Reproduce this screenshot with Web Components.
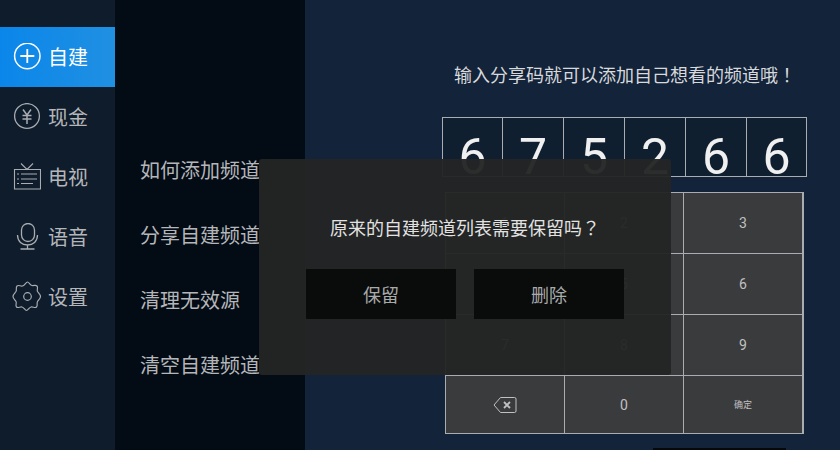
<!DOCTYPE html>
<html><head><meta charset="utf-8">
<style>
html,body{margin:0;padding:0;background:#12233a;}
body{width:840px;height:450px;overflow:hidden;font-family:"Noto Sans CJK SC","Noto Sans",sans-serif;}
</style></head>
<body>
<app-screen>
  <side-nav slot="nav">
    <nav-item active label="自建"><svg viewBox="0 0 28 28" width="28" height="28" fill="none" stroke="#fff" stroke-width="1.5"><circle cx="14.300" cy="13" r="12.700"/><path d="M14.300 6v14M7.300 13h14" stroke-width="1.8"/></svg></nav-item>
    <nav-item label="现金"><svg viewBox="0 0 28 28" width="28" height="28" fill="none" stroke="#a9acb0" stroke-width="1.300"><circle cx="14" cy="13" r="12.400"/><path d="M10 6.500l4 5.500 4-5.500M9.500 12.500h9M9.500 16h9M14 12v9" stroke-width="1.500"/></svg></nav-item>
    <nav-item label="电视"><svg viewBox="0 0 28 28" width="28" height="28" fill="none" stroke="#a9acb0" stroke-width="1.100"><path d="M1.500 6.500h26v19.500h-26zM8 .5l6 6 6-6M4 11h2M8 11h16M4 16h2M8 16h16M4 20.500h2M8 20.500h12"/></svg></nav-item>
    <nav-item label="语音"><svg viewBox="0 0 28 28" width="28" height="28" fill="none" stroke="#a9acb0" stroke-width="1.300"><rect x="8.500" y=".5" width="13" height="18" rx="6.500"/><path d="M4.500 12c0 6.500 4.500 10 10 10s10-3.500 10-10M14.500 22v4M7.500 26h14"/></svg></nav-item>
    <nav-item label="设置"><svg viewBox="0 0 28 28" width="28" height="28" fill="none" stroke="#a9acb0" stroke-width="1.200" style="overflow:visible"><path d="M14.500-1C16-1 17 2 19 2.500S22.500 1.500 24 3s-.5 4 .5 5.500 3 3 3 5-2 3.500-3 5 .5 4-1 5.500-3.500-.5-5.500 0-3 3.500-4.500 3.500-2.500-3-4.500-3.500-4 1.500-5.500 0 .5-4-.5-5.500-3-3-3-5 2-3.500 3-5-.5-4 1-5.500 3.500.5 5.500 0S13-1 14.500-1z"/><circle cx="14.500" cy="13.500" r="3.800"/></svg></nav-item>
  </side-nav>
  <menu-panel slot="menu">
    <menu-row>如何添加频道</menu-row>
    <menu-row>分享自建频道</menu-row>
    <menu-row>清理无效源</menu-row>
    <menu-row>清空自建频道</menu-row>
  </menu-panel>
  <share-pane slot="main">
    <code-boxes code="675266"></code-boxes>
    <num-pad></num-pad>
    <foot-bar></foot-bar>
  </share-pane>
  <confirm-dialog slot="dialog"></confirm-dialog>
</app-screen>
<script>
function def(name, html){
  customElements.define(name, class extends HTMLElement{
    connectedCallback(){
      if(this.shadowRoot) return;
      const r=this.attachShadow({mode:'open'});
      r.innerHTML=typeof html==='function'?html(this):html;
    }
  });
}
def('app-screen',`<style>
:host{display:grid;grid-template-columns:115px 190px 535px;width:840px;height:450px;position:relative;overflow:hidden}
.d{position:absolute;left:259px;top:159px}
</style><slot name="nav"></slot><slot name="menu"></slot><slot name="main"></slot><div class="d"><slot name="dialog"></slot></div>`);
def('side-nav',`<style>
:host{display:flex;flex-direction:column;height:450px;box-sizing:border-box;padding-top:27px;background:#0f1c2b}
</style><slot></slot>`);
def('nav-item',el=>`<style>
:host{display:flex;align-items:center;height:60px;box-sizing:border-box;padding-left:13px;gap:7px;color:#b4b6b9;font-size:20px;line-height:28px}
:host([active]){background:linear-gradient(90deg,#0a86ea,#2090e2);color:#fff}
.i{display:flex;width:28px;height:28px}
</style><span class="i"><slot></slot></span><span>${el.getAttribute('label')}</span>`);
def('menu-panel',`<style>
:host{display:flex;flex-direction:column;height:450px;box-sizing:border-box;padding:137px 0 0 25px;background:#030b14}
</style><slot></slot>`);
def('menu-row',`<style>
:host{display:block;height:65px;line-height:65px;color:#b4b6b9;font-size:20px;white-space:nowrap}
</style><slot></slot>`);
def('share-pane',`<style>
:host{display:flex;flex-direction:column;align-items:flex-start;height:450px;box-sizing:border-box;background:#12233a;padding:0 0 0 137px}
.t{margin:61px 0 0 12px;height:26px;line-height:26px;font-size:18px;color:#d8d9da;white-space:nowrap;}
.p{font-family:"Noto Sans CJK TC",sans-serif}
</style><div class="t">输入分享码就可以添加自己想看的频道哦<span class="p">！</span></div><slot></slot>`);
def('code-boxes',el=>`<style>
:host{display:grid;grid-template-columns:59px 60px 60px 60px 60px 59px;gap:1px;margin-top:30px;width:365px;height:60px;box-sizing:border-box;border:1px solid #a9adb2;background:#a9adb2;overflow:hidden}
span{display:block;height:58px;background:#101f30;font:50px/78px Roboto,sans-serif;color:#f0f0f0;text-align:center;overflow:hidden}
</style>${[...el.getAttribute('code')].map(c=>`<span>${c}</span>`).join('')}`);
def('num-pad',`<style>
:host{display:grid;grid-template-columns:118px 118px 118px;grid-template-rows:60px 60px 60px 57px;gap:1px;margin:15px 0 0 3px;box-sizing:border-box;border:1px solid #a9adb2;border-right-width:2px;background:#a9adb2}
div{display:flex;align-items:center;justify-content:center;background:#3a3b3d;color:#c0c1c2;font:14px Roboto,sans-serif}
.s{font-size:9px;font-family:"Noto Sans CJK SC",sans-serif}
</style>
<div>1</div><div>2</div><div>3</div><div>4</div><div>5</div><div>6</div><div>7</div><div>8</div><div>9</div>
<div><svg width="24" height="18" viewBox="0 0 24 18" fill="none" stroke="#c0c1c2" stroke-width="1"><path d="M7.500 1.500h14a1.500 1.500 0 0 1 1.500 1.500v12a1.500 1.500 0 0 1-1.500 1.500h-14L1 9z"/><path d="M11 6l6 6M17 6l-6 6" stroke-width="1.800"/></svg></div><div>0</div><div class="s">确定</div>`);
def('foot-bar',`<style>
:host{display:block;margin:14px 0 0 211px;width:133px;height:2px;background:#060809}
</style>`);
def('confirm-dialog',`<style>
:host{display:flex;flex-direction:column;align-items:center;width:412px;height:216px;box-sizing:border-box;padding-top:52px;background:rgba(35,36,36,.96);border-radius:3px}
p{margin:0;height:32px;line-height:32px;font-size:18px;color:#e2e2e2;white-space:nowrap}
.q{font-family:"Noto Sans CJK TC",sans-serif}
.b{display:flex;gap:18px;margin-top:26px}
span.k{display:block;width:150px;height:50px;line-height:50px;text-align:center;background:#0a0c0c;color:#a9aaaa;font-size:18px}
</style><p>原来的自建频道列表需要保留吗<span class="q">？</span></p><div class="b"><span class="k">保留</span><span class="k">删除</span></div>`);
</script>
</body></html>
